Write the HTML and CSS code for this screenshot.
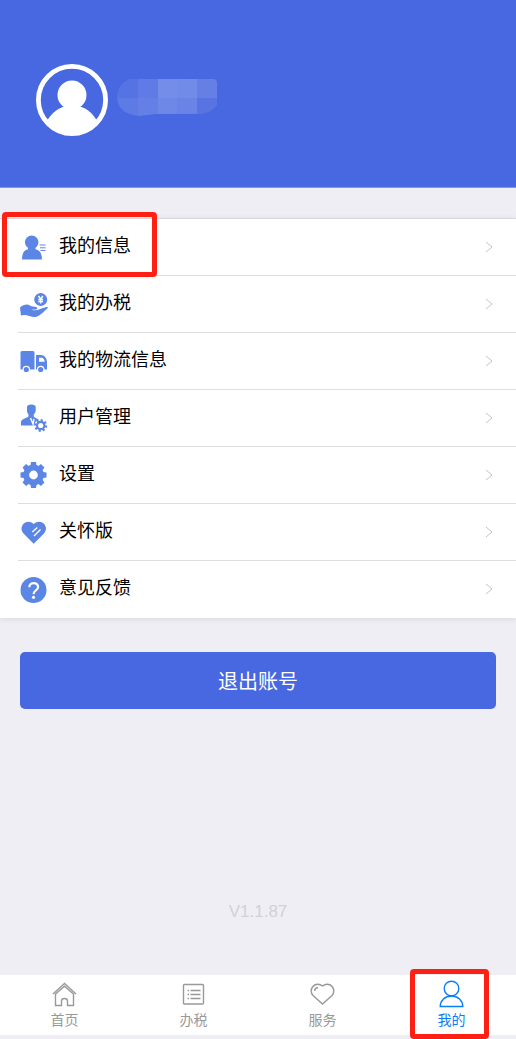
FILE: index.html
```html
<!DOCTYPE html>
<html lang="zh-CN">
<head>
<meta charset="utf-8">
<meta name="viewport" content="width=device-width, initial-scale=1">
<title>我的</title>
<link rel="stylesheet" href="styles.css">
</head>
<body>
<header class="profile">
  <svg class="avatar" viewBox="0 0 72 72" aria-hidden="true">
    <circle cx="36" cy="36" r="33.6" fill="none" stroke="#fff" stroke-width="4.8"/>
    <circle cx="36" cy="31" r="14.5" fill="#fff"/>
    <path d="M11 57C16 48 24 43 31 42h10c8 1 15 6 20 15-7 8-15 13-25 13S17 65 11 57z" fill="#fff"/>
  </svg>
  <svg class="masked-name" viewBox="0 0 100 38" aria-hidden="true">
    <clipPath id="mask"><path d="M12 1h84q4 0 4 4v22q-4 7-16 9H40l-18 2Q0 36 0 18 1 6 12 1z"/></clipPath>
    <g clip-path="url(#mask)">
      <path fill="#5673e4" d="M0 0h21v20H0z"/><path fill="#5e7ae5" d="M0 20h21v18H0z"/>
      <path fill="#607be6" d="M21 0h20v20H21z"/><path fill="#647fe6" d="M21 20h20v18H21z"/>
      <path fill="#748de9" d="M41 0h19v20H41z"/><path fill="#6e88e7" d="M41 20h19v18H41z"/>
      <path fill="#718be8" d="M60 0h20v20H60z"/><path fill="#6984e6" d="M60 20h20v18H60z"/>
      <path fill="#657fe5" d="M80 0h20v20H80z"/><path fill="#5874e3" d="M80 20h20v18H80z"/>
    </g>
  </svg>
</header>
<main class="content">
  <nav class="menu" aria-label="个人中心">
    <a class="row" href="#info">
      <svg class="icon" viewBox="0 0 28 28" aria-hidden="true"><circle cx="11.700" cy="9.300" r="6.700"/><path d="M8 14h7.500v2.300c4 .7 6.500 4.200 6.500 10.200H2c0-6 2-9.500 6-10.200z"/><path class="thin" d="M19.500 12h6M20 14.800h5.500M20.500 17.500h5"/></svg>
      <span class="label">我的信息</span><svg class="arrow" viewBox="0 0 8 12" aria-hidden="true"><path d="M1 1l6 5-6 5"/></svg>
      <span class="mark mark-row"></span>
    </a>
    <a class="row" href="#tax">
      <svg class="icon" viewBox="0 0 28 28" aria-hidden="true"><circle cx="20.700" cy="9.500" r="6.500"/><path class="cut" d="M18.500 6l2.200 3 2.200-3M20.700 9v4.500M18.300 9.500h4.800M18.300 11.500h4.800"/><path d="M0 17.500c3-2.500 7-4 10-2 2 1.200 4 1.200 6 1.400 2.200.3 1.500 2.300-.5 2.500l-4 .3c2.500 1 5 .7 7.500-.2 2.700-1 5-2.300 8-2.600 1.300 0 1.200 1 .3 1.700C23.500 22 20 26 15.500 27 10.500 27.500 6.500 23.500 1 25.500z"/></svg>
      <span class="label">我的办税</span><svg class="arrow" viewBox="0 0 8 12" aria-hidden="true"><path d="M1 1l6 5-6 5"/></svg>
    </a>
    <a class="row" href="#delivery">
      <svg class="icon" viewBox="0 0 28 28" aria-hidden="true"><path d="M2 4h11q1.500 0 1.500 1.500v17H.5v-17Q.5 4 2 4zM16 8h5c3.500 0 6 3.500 6 7v7.500H16z"/><path fill="#fff" d="M19 10.800h3c1.800.5 2.500 2.200 2.700 4H19z"/><circle class="wheel" cx="6.300" cy="22.500" r="3.200"/><circle class="wheel" cx="20.700" cy="22.500" r="3.200"/></svg>
      <span class="label">我的物流信息</span><svg class="arrow" viewBox="0 0 8 12" aria-hidden="true"><path d="M1 1l6 5-6 5"/></svg>
    </a>
    <a class="row" href="#users">
      <svg class="icon" viewBox="0 0 28 28" aria-hidden="true"><path d="M7 3q0-2.500 4.300-2.500T15.700 3v4q-.5 2.500-2 3.500v2c1 1.500 4 2 5.300 3.500L14 21.500H1V18c0-3 5-3.500 7.500-5.500v-2Q7.300 9.500 7 7z"/><path class="cut" d="M10.500 14l2.500 6 1-5"/><circle cx="20.700" cy="21.500" r="6.300" fill="#fff"/><circle class="teeth" cx="20.700" cy="21.500" r="5.300" pathLength="80"/><circle class="ring" cx="20.700" cy="21.500" r="3.700"/></svg>
      <span class="label">用户管理</span><svg class="arrow" viewBox="0 0 8 12" aria-hidden="true"><path d="M1 1l6 5-6 5"/></svg>
    </a>
    <a class="row" href="#settings">
      <svg class="icon" viewBox="0 0 28 28" aria-hidden="true"><circle cx="13.500" cy="14" r="7.400" fill="none" stroke="#5b86e5" stroke-width="6"/><path d="M10.500 4.500L11 1h5l.5 3.500zM10.500 23.500l.5 3.500h5l.5-3.500zM4 11l-3.500.5v5L4 17zM23 11l3.500.5v5L23 17z"/><path transform="rotate(45 13.500 14)" d="M10.500 4.500L11 1h5l.5 3.500zM10.500 23.500l.5 3.500h5l.5-3.500zM4 11l-3.500.5v5L4 17zM23 11l3.500.5v5L23 17z"/></svg>
      <span class="label">设置</span><svg class="arrow" viewBox="0 0 8 12" aria-hidden="true"><path d="M1 1l6 5-6 5"/></svg>
    </a>
    <a class="row" href="#care">
      <svg class="icon" viewBox="0 0 28 28" aria-hidden="true"><path d="M13.700 6C10 2.500 6 3.500 3.500 5.800.7 9 1 12.500 3.500 15.500l10.200 10.300L24 15.500c2.500-3 2.800-6.500 0-9.700C21.500 3.500 17.500 2.500 13.700 6z"/><path class="cut" d="M12.300 14l5-4.500M14 18l6.500-6.500"/></svg>
      <span class="label">关怀版</span><svg class="arrow" viewBox="0 0 8 12" aria-hidden="true"><path d="M1 1l6 5-6 5"/></svg>
    </a>
    <a class="row" href="#feedback">
      <svg class="icon" viewBox="0 0 28 28" aria-hidden="true"><circle cx="13.500" cy="15" r="13"/><path d="M9.300 12.300c0-5.800 9-5.500 8.800-.3 0 3.300-4.500 3.300-4.500 7.200" fill="none" stroke="#fff" stroke-width="2.200"/><circle cx="13.500" cy="22.300" r="1.600" fill="#fff"/></svg>
      <span class="label">意见反馈</span><svg class="arrow" viewBox="0 0 8 12" aria-hidden="true"><path d="M1 1l6 5-6 5"/></svg>
    </a>
  </nav>
  <button class="logout" type="button">退出账号</button>
  <p class="version">V1.1.87</p>
</main>
<nav class="tabs" aria-label="主导航">
  <a class="tab" href="#home">
    <svg class="tab-icon" viewBox="0 0 28 28" aria-hidden="true"><path d="M2 14L13.500 3.500 25 14M4 14.500l9.500-8.300 9.500 8.300M4.500 14v11.500h6V21q0-2.500 3-2.500t3 2.500v4.500h6V14"/></svg>
    <span>首页</span>
  </a>
  <a class="tab" href="#handle">
    <svg class="tab-icon" viewBox="0 0 28 28" aria-hidden="true"><rect x="3.500" y="4.500" width="20" height="19.500" rx="1"/><path d="M7.500 10.500H9M7.500 14.500H9M7.500 18.500H9M10.500 10.500h10M10.500 14.500h10M10.500 18.500h10"/></svg>
    <span>办税</span>
  </a>
  <a class="tab" href="#service">
    <svg class="tab-icon" viewBox="0 0 28 28" aria-hidden="true"><path d="M13.500 6C10.500 3.500 6 3.500 3.500 7c-2 3-1.500 6 .5 8.500l9.500 8.500 9.500-8.500C25 13 25.500 10 23.500 7c-2.500-3.500-7-3.500-10-1zM5.500 11q.3-3 3.500-3.500"/></svg>
    <span>服务</span>
  </a>
  <a class="tab active" href="#mine" aria-current="page">
    <svg class="tab-icon" viewBox="0 0 28 28" aria-hidden="true"><circle cx="13.500" cy="8.500" r="7.300"/><path d="M2.200 26.500c0-6 5-10.500 11.300-10.500s11.300 4.500 11.300 10.500z"/></svg>
    <span>我的</span><span class="mark mark-tab"></span>
  </a>
</nav>
</body>
</html>
```
FILE: styles.css
```css
* { box-sizing: border-box; }
body {
  margin: 0;
  min-height: 100vh;
  display: flex;
  flex-direction: column;
  background: #efeef4;
  color: #000;
  font-family: "Liberation Sans", "Noto Sans CJK SC", sans-serif;
}
a { color: inherit; text-decoration: none; }
.profile {
  display: flex;
  align-items: center;
  gap: 9px;
  padding: 64px 36px 51px;
  background: #4768e0;
  border-bottom: 1px solid #8296e7;
}
.avatar { width: 72px; height: 72px; }
.masked-name { width: 100px; height: 38px; margin-bottom: 6px; }
.content { flex: 1; display: flex; flex-direction: column; }
.menu {
  margin-top: 30px;
  background: #fff;
  border-top: 1px solid #d9d9dc;
  box-shadow: 0 1px 6px #00000018;
}
.row {
  position: relative;
  display: flex;
  align-items: center;
  gap: 11px;
  height: 57px;
  padding: 0 23px 2px 20px;
  font-size: 18px;
  line-height: 26px;
}
.row:not(:last-child) {
  background: linear-gradient(#dedee0, #dedee0) 18px 100% / 100% 1px no-repeat;
}
.icon { width: 28px; height: 28px; fill: #5b86e5; }
.label { flex: 1; padding-bottom: 2px; }
.arrow { width: 8px; height: 12px; fill: none; stroke: #c4c4c8; }
.thin { stroke: #5b86e5; stroke-width: 1; }
.cut { fill: none; stroke: #fff; stroke-width: 1.4; }
.wheel { stroke: #fff; stroke-width: 1.2; }
.ring { fill: none; stroke: #5b86e5; stroke-width: 2.2; }
.teeth { fill: none; stroke: #5b86e5; stroke-width: 2.4; stroke-dasharray: 5 5; }
.mark {
  position: absolute;
  border: 5px solid #ff2014;
  border-radius: 4px;
  pointer-events: none;
}
.mark-row { left: 2px; top: -7px; width: 155px; height: 65px; }
.logout {
  margin: 34px 20px 0;
  height: 57px;
  padding: 0;
  border: 0;
  border-radius: 5px;
  background: #4768e0;
  color: #fff;
  font: inherit;
  font-size: 20px;
}
.version {
  margin: auto 0 52px;
  text-align: center;
  font-size: 17px;
  line-height: 22px;
  color: #d0d2d6;
}
.tabs {
  display: grid;
  grid-template-columns: repeat(4, 1fr);
  margin-bottom: 4px;
  background: #fff;
}
.tab {
  position: relative;
  display: flex;
  flex-direction: column;
  align-items: center;
  height: 60px;
  padding-top: 5px;
  font-size: 14px;
  line-height: 24px;
  color: #999;
}
.tab-icon { width: 28px; height: 28px; fill: none; stroke: currentColor; stroke-width: 1.4; }
.active { color: #0b7df8; }
.mark-tab { inset: -6px 27px -4px 23px; }
```
